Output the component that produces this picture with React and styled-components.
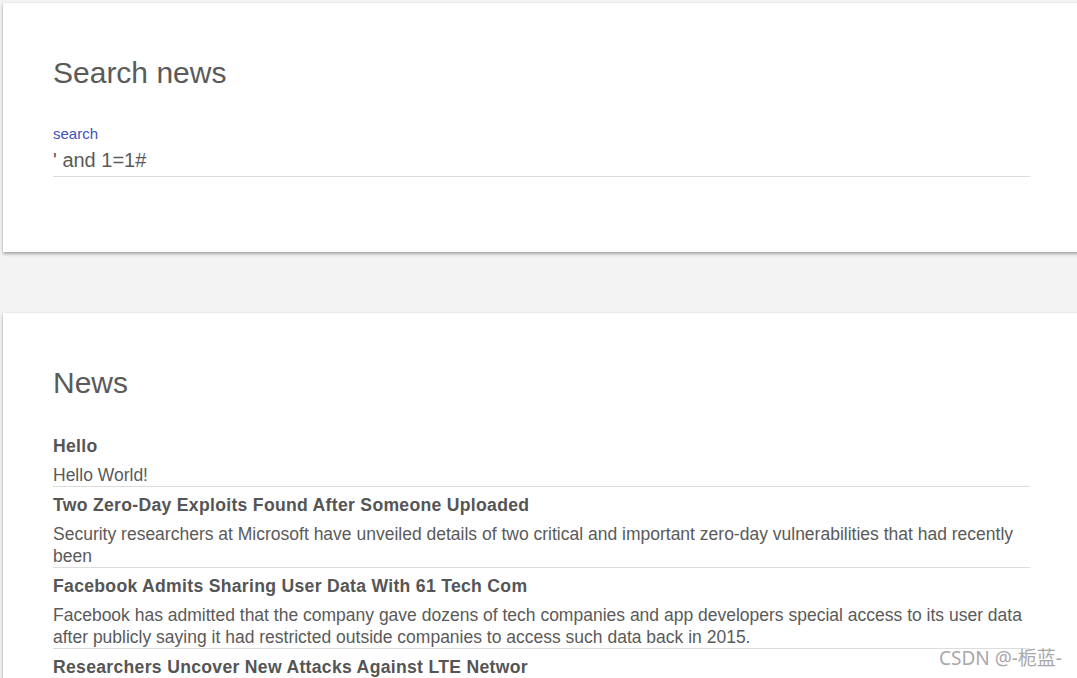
import React from "react";
import styled, {createGlobalStyle} from "styled-components";

const GlobalStyle = createGlobalStyle`
  html, body {
    margin: 0;
    padding: 0;
    background: #f3f3f3;
    overflow: hidden;
  }
  body {
    font-family: "Liberation Sans", Arial, sans-serif;
    color: #555;
  }
`;

const Page = styled.div`
  display: flex;
  flex-direction: column;
  gap: 61px;
  padding: 3px 0 0 3px;
  width: 1077px;
  height: 678px;
  box-sizing: border-box;
  overflow: hidden;
  position: relative;
`;

const Card = styled.section`
  background: #fff;
  width: 1080px;
  box-sizing: border-box;
  padding: 52px 53px ${p => p.$bottom}px 50px;
  box-shadow: 0 2px 3px rgba(0, 0, 0, 0.3), 0 0 2px rgba(0, 0, 0, 0.08);
`;

const Heading = styled.h2`
  margin: 0;
  font-size: 30px;
  line-height: 36px;
  font-weight: 400;
  color: #5a5a5a;
`;

const Field = styled.label`
  display: flex;
  flex-direction: column;
  gap: 4px;
  margin-top: 34px;
  padding-bottom: 3px;
  border-bottom: 1px solid #dcdcdc;
`;

const FieldLabel = styled.span`
  font-size: 15px;
  line-height: 18px;
  color: #3f51c0;
`;

const Input = styled.input`
  border: 0;
  outline: none;
  padding: 0;
  margin: 0;
  background: transparent;
  font-family: "Liberation Sans", Arial, sans-serif;
  font-size: 20px;
  line-height: 26px;
  height: 26px;
  color: #5a5a5a;
`;

const NewsList = styled.div`
  display: flex;
  flex-direction: column;
  margin-top: 27px;
`;

const NewsItem = styled.article`
  display: flex;
  flex-direction: column;
  gap: 6px;
  padding-top: 6px;
  border-bottom: 1px solid #dcdcdc;
`;

const NewsTitle = styled.h3`
  margin: 0;
  font-size: 17.6px;
  line-height: 24px;
  font-weight: 700;
  letter-spacing: 0.3px;
  color: #555;
`;

const NewsText = styled.p`
  margin: 0;
  font-size: 17.5px;
  line-height: 22px;
  color: #5a5a5a;
`;

const Watermark = styled.div`
  position: absolute;
  right: 15px;
  bottom: 7px;
  font-family: "Noto Sans", "Noto Sans CJK SC", sans-serif;
  font-size: 19px;
  color: #a8a8a8;
  text-shadow: 0 0 2px #fff, 0 0 2px #fff;
`;

const news = [
  {title: "Hello", text: "Hello World!"},
  {
    title: "Two Zero-Day Exploits Found After Someone Uploaded",
    text: "Security researchers at Microsoft have unveiled details of two critical and important zero-day vulnerabilities that had recently been",
  },
  {
    title: "Facebook Admits Sharing User Data With 61 Tech Com",
    text: "Facebook has admitted that the company gave dozens of tech companies and app developers special access to its user data after publicly saying it had restricted outside companies to access such data back in 2015.",
  },
  {
    title: "Researchers Uncover New Attacks Against LTE Networ",
    text: "Researchers have discovered new attacks against LTE networks.",
  },
];

export default function App() {
  return (
    <>
      <GlobalStyle/>
      <Page>
        <Card $bottom={75}>
          <Heading>Search news</Heading>
          <Field>
            <FieldLabel>search</FieldLabel>
            <Input defaultValue="' and 1=1#"/>
          </Field>
        </Card>
        <Card $bottom={40}>
          <Heading>News</Heading>
          <NewsList>
            {news.map(item => (
              <NewsItem key={item.title}>
                <NewsTitle>{item.title}</NewsTitle>
                <NewsText>{item.text}</NewsText>
              </NewsItem>
            ))}
          </NewsList>
        </Card>
        <Watermark>CSDN @-栀蓝-</Watermark>
      </Page>
    </>
  );
}
